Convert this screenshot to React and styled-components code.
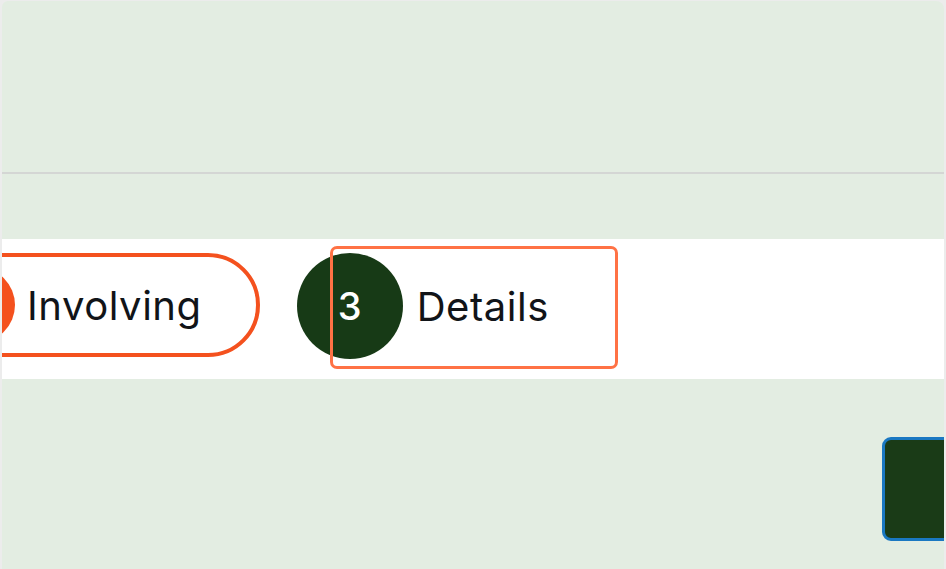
import React from "react";
import styled, { createGlobalStyle } from "styled-components";

const Global = createGlobalStyle`
  html, body { margin: 0; padding: 0; background: #ececec; }
  body { font-family: Inter, "Noto Sans", sans-serif; }
`;

const Frame = styled.div`
  width: 946px;
  height: 569px;
  box-sizing: border-box;
  padding: 1px 2px 0 2px;
  overflow: hidden;
`;

const Panel = styled.div`
  height: 568px;
  background: #e3ede2;
  border-radius: 6px 8px 0 0;
  overflow: hidden;
  display: flex;
  flex-direction: column;
`;

const Header = styled.div`
  height: 171px;
  flex-shrink: 0;
`;

const Divider = styled.div`
  height: 2px;
  background: #d4d6d4;
  flex-shrink: 0;
`;

const Spacer = styled.div`
  height: 65px;
  flex-shrink: 0;
`;

const Band = styled.div`
  height: 140px;
  flex-shrink: 0;
  background: #ffffff;
  display: flex;
  align-items: flex-start;
  padding-top: 14px;
  box-sizing: border-box;
  overflow: hidden;
`;

const Steps = styled.div`
  display: flex;
  align-items: flex-start;
  gap: 37px;
  margin-left: -83px;
`;

const Pill = styled.div`
  display: flex;
  align-items: center;
  gap: 12px;
  height: 104px;
  box-sizing: border-box;
  border: 4px solid #f4511e;
  border-radius: 52px;
  padding: 0 54px 0 16px;
`;

const Circle = styled.div`
  width: ${(p) => p.$size}px;
  height: ${(p) => p.$size}px;
  border-radius: 50%;
  flex-shrink: 0;
  background: ${(p) => p.$bg};
  color: #ffffff;
  display: flex;
  align-items: center;
  justify-content: center;
  font-size: 38px;
  font-weight: 500;
`;

const Label = styled.span`
  font-size: 40px;
  color: #111418;
  letter-spacing: 0.55px;
  line-height: 1;
  padding-top: 2px;
`;

const Step = styled.div`
  position: relative;
  display: flex;
  align-items: center;
  gap: 14px;
  height: 106px;
`;

const Focus = styled.div`
  position: absolute;
  left: 33px;
  top: -7px;
  width: 288px;
  height: 123px;
  box-sizing: border-box;
  border: 3px solid #ff7245;
  border-radius: 7px;
  pointer-events: none;
`;

const Bottom = styled.div`
  flex: 1;
  display: flex;
  justify-content: flex-end;
  align-items: flex-start;
  padding-top: 58px;
`;

const NextButton = styled.button`
  width: 120px;
  height: 104px;
  margin-right: -58px;
  background: #1a3b17;
  border: 3px solid #1a78c2;
  border-radius: 9px;
  flex-shrink: 0;
`;

export default function App() {
  return (
    <>
      <Global />
      <Frame>
        <Panel>
          <Header />
          <Divider />
          <Spacer />
          <Band>
            <Steps>
              <Pill>
                <Circle $size={76} $bg="#f4511e">2</Circle>
                <Label>Involving</Label>
              </Pill>
              <Step>
                <Circle $size={106} $bg="#173a16">3</Circle>
                <Label>Details</Label>
                <Focus />
              </Step>
            </Steps>
          </Band>
          <Bottom>
            <NextButton aria-label="Next" />
          </Bottom>
        </Panel>
      </Frame>
    </>
  );
}
